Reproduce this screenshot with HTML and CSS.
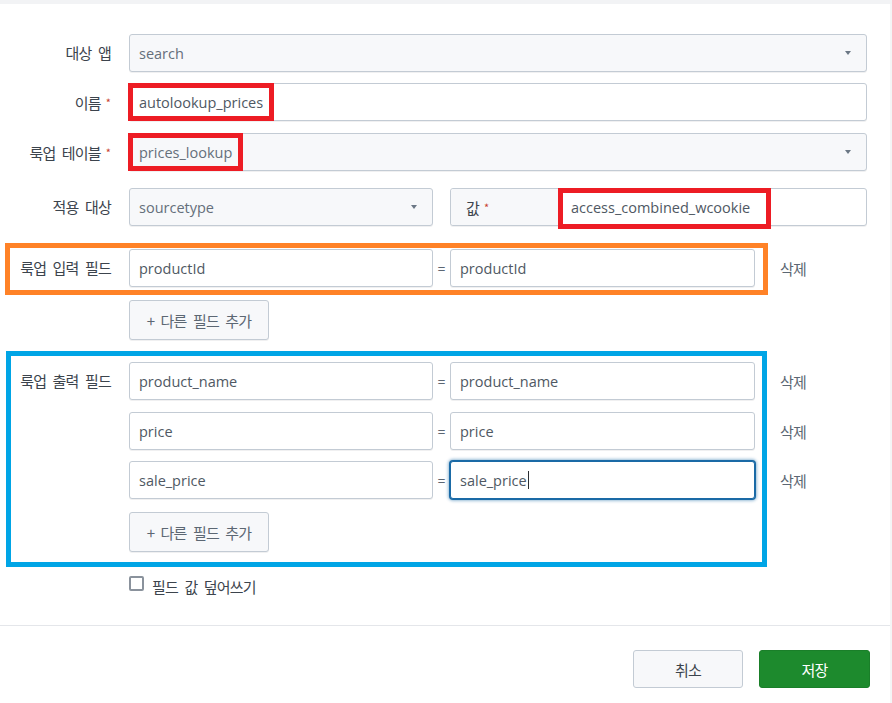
FILE: index.html
```html
<!DOCTYPE html>
<html lang="ko">
<head>
<meta charset="utf-8">
<title>자동 룩업</title>
<link rel="stylesheet" href="styles.css">
</head>
<body>
<div class="topbar"></div>
<div class="sheet">
  <div class="form">
    <div class="row r1">
      <div class="label">대상 앱</div>
      <div class="ctrl select full"><span class="val muted">search</span><span class="caret"></span></div>
    </div>
    <div class="row r2">
      <div class="label">이름<span class="req">*</span></div>
      <div class="ctrl input full"><span class="mark"><span class="val">autolookup_prices</span></span></div>
    </div>
    <div class="row r3">
      <div class="label">룩업 테이블<span class="req">*</span></div>
      <div class="ctrl select full"><span class="mark"><span class="val muted">prices_lookup</span></span><span class="caret"></span></div>
    </div>
    <div class="row r4">
      <div class="label">적용 대상</div>
      <div class="ctrl select half"><span class="val muted">sourcetype</span><span class="caret"></span></div>
      <div class="gap"></div>
      <div class="ctrl input wide prefixed">
        <span class="prefix">값<span class="req">*</span></span>
        <span class="mark mark-b"><span class="val">access_combined_wcookie</span></span>
      </div>
    </div>

    <div class="group g-in">
      <div class="row pair hl-orange">
        <div class="label">룩업 입력 필드</div>
        <div class="ctrl input half"><span class="val">productId</span></div>
        <div class="eq">=</div>
        <div class="ctrl input half2"><span class="val">productId</span></div>
        <div class="del">삭제</div>
      </div>
      <div class="row btnrow">
        <div class="label"></div>
        <button class="btn add" type="button">+ 다른 필드 추가</button>
      </div>
    </div>

    <div class="group g-out hl-blue">
      <div class="row pair">
        <div class="label">룩업 출력 필드</div>
        <div class="ctrl input half"><span class="val">product_name</span></div>
        <div class="eq">=</div>
        <div class="ctrl input half2"><span class="val">product_name</span></div>
        <div class="del">삭제</div>
      </div>
      <div class="row pair p2">
        <div class="label"></div>
        <div class="ctrl input half"><span class="val">price</span></div>
        <div class="eq">=</div>
        <div class="ctrl input half2"><span class="val">price</span></div>
        <div class="del">삭제</div>
      </div>
      <div class="row pair p3">
        <div class="label"></div>
        <div class="ctrl input half"><span class="val">sale_price</span></div>
        <div class="eq">=</div>
        <div class="ctrl input half2 focus"><span class="val">sale_price</span><span class="cursor"></span></div>
        <div class="del">삭제</div>
      </div>
      <div class="row btnrow">
        <div class="label"></div>
        <button class="btn add" type="button">+ 다른 필드 추가</button>
      </div>
    </div>

    <div class="row checkrow">
      <div class="label"></div>
      <span class="checkbox"></span>
      <span class="checklabel">필드 값 덮어쓰기</span>
    </div>
  </div>

  <div class="footer">
    <button class="btn cancel" type="button">취소</button>
    <button class="btn save" type="button">저장</button>
  </div>
</div>
</body>
</html>
```

FILE: styles.css
```css
html, body {
  margin: 0;
  padding: 0;
  background: #ffffff;
}
body {
  font-family: "Noto Sans CJK KR", "Open Sans", sans-serif;
  font-size: 15px;
  color: #3c444d;
  width: 892px;
  height: 703px;
  overflow: hidden;
}
.topbar {
  height: 4px;
  background: #f2f3f5;
}
.sheet {
  width: 890px;
  border-right: 2px solid #f4f5f6;
  height: 699px;
}
.form {
  padding-top: 30px;
}
.row {
  display: flex;
  align-items: center;
  height: 38px;
}
.r2 { margin-top: 11px; }
.r3 { margin-top: 12px; }
.r4 { margin-top: 17px; }
.g-in { margin-top: 23px; }
.btnrow { margin-top: 13px; height: 40px; }
.g-out { margin-top: 22px; }
.p2 { margin-top: 12px; }
.p3 { margin-top: 11px; }
.checkrow { margin-top: 24px; height: 20px; align-items: flex-start; }

.label, .del, .btn, .checklabel, .prefix {
  letter-spacing: -0.8px;
  word-spacing: 3px;
}

.label {
  width: 129px;
  flex: none;
  box-sizing: border-box;
  padding-right: 18px;
  text-align: right;
  color: #3c444d;
  white-space: nowrap;
  line-height: 20px;
}
.req {
  color: #c8402f;
  font-size: 11px;
  margin-left: 5px;
  letter-spacing: 0;
  vertical-align: 2px;
}

.ctrl {
  box-sizing: border-box;
  height: 38px;
  border: 1px solid #c3cbd4;
  border-radius: 3px;
  box-shadow: 0 1px 0 rgba(60, 68, 77, 0.08);
  display: flex;
  align-items: center;
  padding: 0 9px;
  flex: none;
  position: relative;
}
.input { background: #ffffff; }
.select { background: #f7f8fa; }
.full { width: 738px; }
.half { width: 304px; }
.half2 { width: 305px; }
.wide { width: 417px; }
.gap { width: 17px; flex: none; }

.val {
  font-family: "Open Sans", "Noto Sans CJK KR", sans-serif;
  font-size: 14.5px;
  color: #4f5863;
  white-space: nowrap;
}
.val.muted { color: #656f7b; }

.caret {
  margin-left: auto;
  margin-right: 6px;
  width: 0;
  height: 0;
  border-left: 3.5px solid transparent;
  border-right: 3.5px solid transparent;
  border-top: 4px solid #6b7785;
}

.mark {
  position: relative;
  align-self: stretch;
  display: flex;
  align-items: center;
  margin-left: -9px;
  padding: 0 11px 0 9px;
}
.mark::after {
  content: "";
  position: absolute;
  top: -1px;
  bottom: -1px;
  left: -2px;
  right: 0;
  border: 5px solid #ed1c24;
}

.prefixed { padding: 0; }
.prefix {
  align-self: stretch;
  width: 108px;
  flex: none;
  box-sizing: border-box;
  background: #f7f8fa;
  border-right: 1px solid #c3cbd4;
  border-radius: 3px 0 0 3px;
  display: flex;
  align-items: center;
  padding-left: 15px;
  color: #3c444d;
}
.mark-b {
  margin-left: 0;
  padding: 0 21px 0 12px;
}
.mark-b::after {
  left: -1px;
  top: -1px;
  bottom: -4px;
}

.eq {
  width: 17px;
  flex: none;
  text-align: center;
  color: #5c6773;
  font-family: "Open Sans", sans-serif;
  font-size: 14px;
}
.del {
  margin-left: 25px;
  color: #5c6773;
  white-space: nowrap;
}

.focus {
  border-color: #1a6aa6;
  box-shadow: 0 0 0 1px #1a6aa6, 0 0 3px 2px rgba(26, 106, 166, 0.45);
}
.cursor {
  display: inline-block;
  width: 1px;
  height: 18px;
  background: #2b2f33;
  margin-left: 1px;
}

.hl-orange, .hl-blue { position: relative; }
.hl-orange::after {
  content: "";
  position: absolute;
  left: 5px;
  width: 763px;
  top: -6px;
  bottom: -8px;
  box-sizing: border-box;
  border: 5px solid #ff8227;
  pointer-events: none;
}
.hl-blue::after {
  content: "";
  position: absolute;
  left: 6px;
  width: 761px;
  top: -11px;
  bottom: -15px;
  box-sizing: border-box;
  border: 5px solid #00a5e6;
  pointer-events: none;
}

.btn {
  font-family: "Noto Sans CJK KR", "Open Sans", sans-serif;
  font-size: 15px;
  box-sizing: border-box;
  border-radius: 3px;
  cursor: pointer;
  padding: 0;
}
.add {
  width: 140px;
  height: 40px;
  background: #f7f8fa;
  border: 1px solid #c3cbd4;
  color: #5c6773;
  box-shadow: 0 1px 0 rgba(60, 68, 77, 0.08);
}

.checkbox {
  width: 15px;
  height: 15px;
  box-sizing: border-box;
  border: 2px solid #8a929c;
  border-radius: 2px;
  background: #ffffff;
  flex: none;
}
.checklabel {
  margin-left: 8px;
  margin-top: 1px;
  color: #3c444d;
  line-height: 20px;
}

.footer {
  margin-top: 29px;
  border-top: 1px solid #e4e6ea;
  padding: 24px 20px 0 0;
  display: flex;
  justify-content: flex-end;
  gap: 16px;
}
.cancel {
  width: 110px;
  height: 38px;
  background: #f7f8fa;
  border: 1px solid #c3cbd4;
  color: #3c444d;
}
.save {
  width: 111px;
  height: 38px;
  background: #1d8a2d;
  border: 1px solid #1a7f29;
  color: #ffffff;
}
```
